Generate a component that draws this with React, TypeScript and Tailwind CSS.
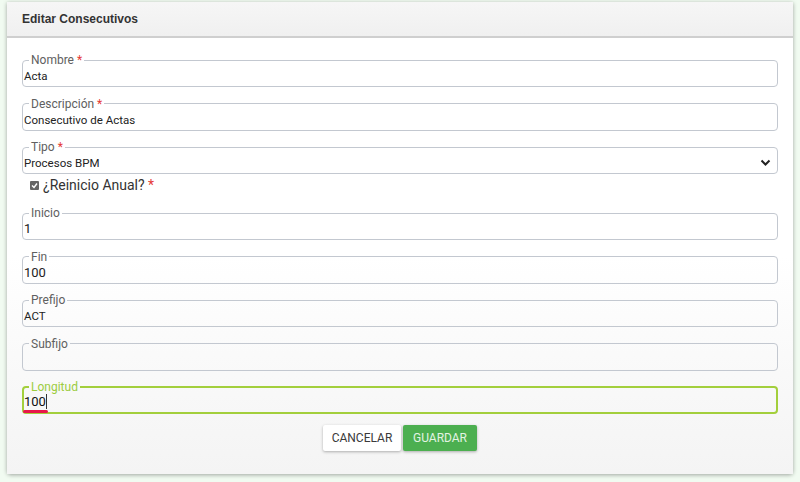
import React from "react";

type FieldProps = {
  label: string;
  value: string;
  required?: boolean;
  big?: boolean;
};

function Field({ label, value, required, big }: FieldProps) {
  return (
    <fieldset className="border border-[#c3c8d0] rounded-[4px] px-[1px] mx-0">
      <legend className="ml-[5px] px-[2px] text-[12px] leading-[14px] text-[#606060]">
        {label}
        {required && <span className="text-[#e53935]"> *</span>}
      </legend>
      <div className={`h-[19px] pt-[1px] leading-[16px] text-[#222] ${big ? "text-[13px]" : "text-[11.5px]"}`}>
        {value}
      </div>
    </fieldset>
  );
}

export default function App() {
  return (
    <div className="w-[800px] h-[482px] bg-[#f1fbf1] pt-[2px] px-[7px] font-['Roboto',sans-serif]">
      <div className="bg-white rounded-b-[4px] shadow-[0_1px_4px_rgba(0,0,0,0.35)] h-[472px] flex flex-col">
        <div className="h-[36px] bg-gradient-to-b from-[#f6f6f6] to-[#f0f0f0] border-b-2 border-[#cfcfcf] flex items-center px-[15px]">
          <h1 className="text-[12px] font-bold text-[#333] font-['Liberation_Sans',sans-serif]">
            Editar Consecutivos
          </h1>
        </div>
        <div className="flex-1 px-[15px] pt-[15px] flex flex-col gap-[9.5px] bg-gradient-to-b from-white via-white to-[#f4f4f4]">
          <Field label="Nombre" value="Acta" required />
          <Field label="Descripción" value="Consecutivo de Actas" required />
          <fieldset className="border border-[#c3c8d0] rounded-[4px] px-[1px]">
            <legend className="ml-[5px] px-[2px] text-[12px] leading-[14px] text-[#606060]">
              Tipo<span className="text-[#e53935]"> *</span>
            </legend>
            <div className="h-[19px] pt-[1px] leading-[16px] text-[11.5px] text-[#222] flex items-start justify-between pr-[5px]">
              <span>Procesos BPM</span>
              <svg width="11" height="8" viewBox="0 0 11 8" className="mt-[4px]">
                <path d="M1.5 1.5 L5.5 5.5 L9.5 1.5" fill="none" stroke="#222" strokeWidth="2" />
              </svg>
            </div>
          </fieldset>
          <div className="flex items-center gap-[4px] pl-[8px] -mt-[7px] h-[18px]">
            <span className="w-[9px] h-[9px] rounded-[1px] bg-[#666] flex items-center justify-center">
              <svg width="7" height="7" viewBox="0 0 7 7">
                <path d="M1 3.5 L3 5.5 L6 1.5" fill="none" stroke="white" strokeWidth="1.4" />
              </svg>
            </span>
            <span className="text-[14px] text-[#333]">
              ¿Reinicio Anual?<span className="text-[#e53935]"> *</span>
            </span>
          </div>
          <div className="mt-[2px] flex flex-col gap-[9.5px]">
            <Field label="Inicio" value="1" big />
            <Field label="Fin" value="100" big />
            <Field label="Prefijo" value="ACT" />
            <Field label="Subfijo" value="" />
            <fieldset className="relative border-2 border-[#a3cf3c] rounded-[4px] px-0">
              <legend className="ml-[5px] px-[2px] text-[12px] leading-[14px] text-[#9ccc3e]">Longitud</legend>
              <div className="h-[18px] leading-[16px] text-[13px] text-[#111] flex items-start">
                <span>100</span>
                <span className="w-px h-[15px] bg-[#333]"></span>
              </div>
              <span className="absolute left-[-1px] bottom-[-1px] w-[25px] h-[3px] rounded-[2px] bg-[#e8174a]"></span>
            </fieldset>
          </div>
          <div className="flex justify-center gap-[2px] mt-[1px]">
            <button className="h-[26px] w-[78px] bg-white text-[#3a3a3a] text-[12px] rounded-[2px] shadow-[0_1px_3px_rgba(0,0,0,0.3)]">
              CANCELAR
            </button>
            <button className="h-[26px] w-[74px] bg-[#4caf50] text-[#e3f3e3] text-[12px] rounded-[2px] shadow-[0_1px_3px_rgba(0,0,0,0.3)]">
              GUARDAR
            </button>
          </div>
        </div>
      </div>
    </div>
  );
}
